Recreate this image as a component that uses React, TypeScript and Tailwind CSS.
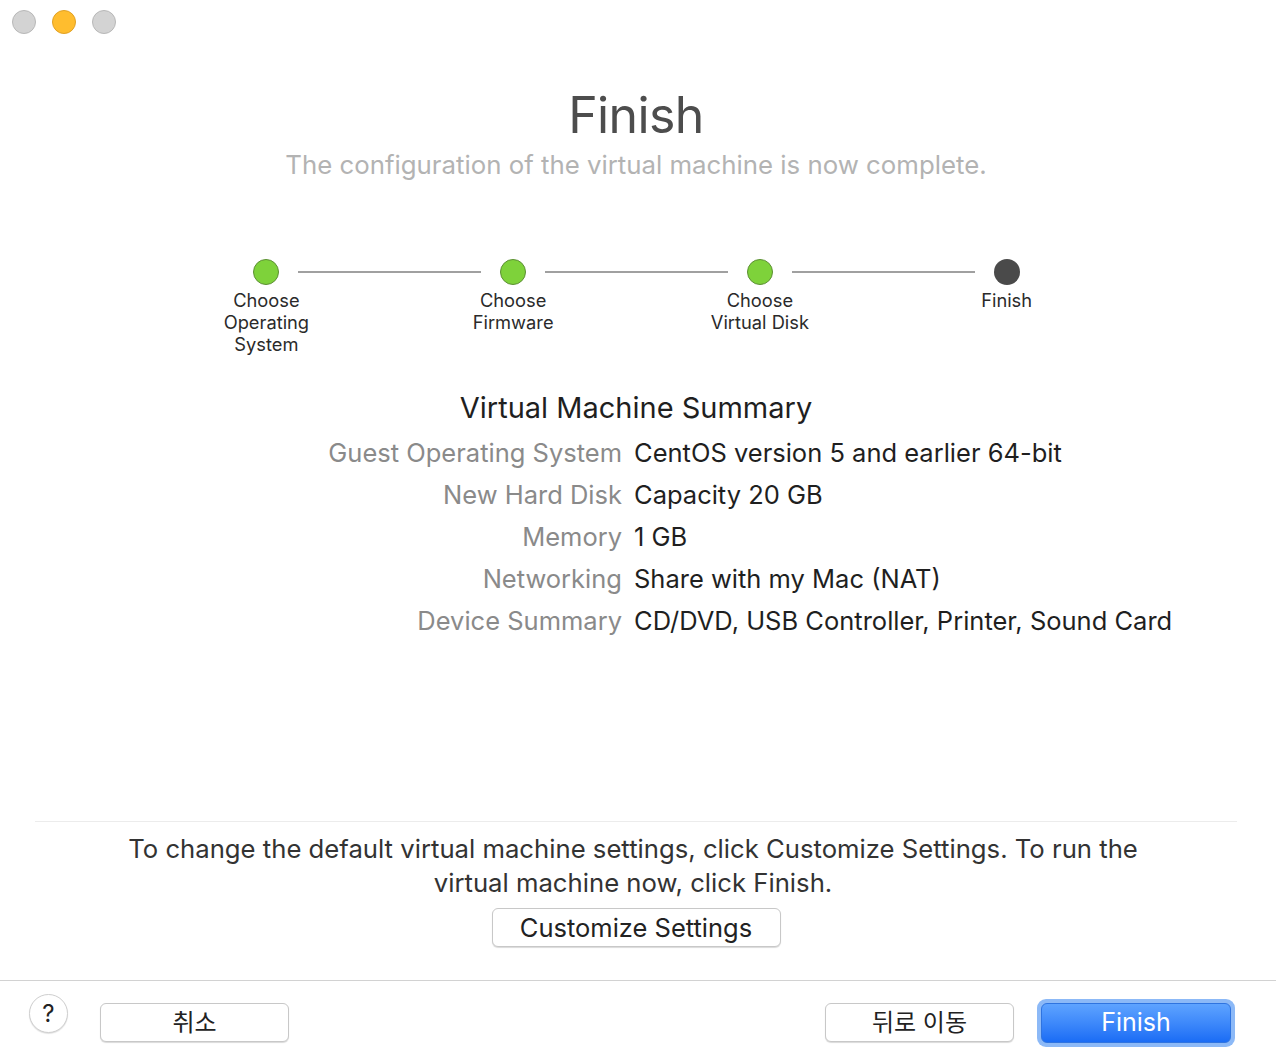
import React from "react"

const font = { fontFamily: "Inter, 'Noto Sans CJK KR', sans-serif" }

type Step = { label: string[]; done: boolean }

const steps: Step[] = [
  { label: ["Choose", "Operating", "System"], done: true },
  { label: ["Choose", "Firmware"], done: true },
  { label: ["Choose", "Virtual Disk"], done: true },
  { label: ["Finish"], done: false },
]

const summary = [
  ["Guest Operating System", "CentOS version 5 and earlier 64-bit"],
  ["New Hard Disk", "Capacity 20 GB"],
  ["Memory", "1 GB"],
  ["Networking", "Share with my Mac (NAT)"],
  ["Device Summary", "CD/DVD, USB Controller, Printer, Sound Card"],
]

function Dot({ done }: { done: boolean }) {
  return done ? (
    <div className="w-[26px] h-[26px] rounded-full bg-[#7ed23a] border border-[#5c8f33] shrink-0" />
  ) : (
    <div className="w-[26px] h-[26px] rounded-full bg-[#4a4a4a] shrink-0" />
  )
}

export default function App() {
  return (
    <div className="w-[1276px] h-[1064px] bg-white flex flex-col text-[#222]" style={font}>
      {/* traffic lights */}
      <div className="flex gap-[16px] pl-[12px] pt-[10px]">
        <div className="w-[24px] h-[24px] rounded-full bg-[#d3d3d3] border border-[#b8b8b8]" />
        <div className="w-[24px] h-[24px] rounded-full bg-[#ffbd2e] border border-[#e1a125]" />
        <div className="w-[24px] h-[24px] rounded-full bg-[#d3d3d3] border border-[#b8b8b8]" />
      </div>

      {/* heading */}
      <div className="flex flex-col items-center pr-[4px] mt-[50px]">
        <h1 className="text-[50px] leading-[62px] text-[#4d4d4d] tracking-[-0.6px]">Finish</h1>
        <p className="text-[25.8px] leading-[34px] text-[#b3b3b3] mt-[2px]">
          The configuration of the virtual machine is now complete.
        </p>
      </div>

      {/* stepper */}
      <div className="w-[987px] ml-[143px] mt-[77px]">
        <div className="flex items-center px-[110px]">
          {steps.map((s, i) => (
            <React.Fragment key={i}>
              <Dot done={s.done} />
              {i < steps.length - 1 && <div className="flex-1 h-[2px] bg-[#a0a0a0] mx-[19px]" />}
            </React.Fragment>
          ))}
        </div>
        <div className="grid grid-cols-4 mt-[4px]">
          {steps.map((s, i) => (
            <div key={i} className="flex flex-col items-center text-[18.3px] leading-[22px] text-[#2a2a2a]">
              {s.label.map((l) => (
                <span key={l}>{l}</span>
              ))}
            </div>
          ))}
        </div>
      </div>

      {/* summary */}
      <h2 className="text-center pr-[4px] text-[29px] leading-[36px] text-[#1f1f1f] mt-[35px]">
        Virtual Machine Summary
      </h2>
      <div className="grid grid-cols-[622px_1fr] gap-x-[12px] mt-[6px] text-[25.5px] leading-[42px]">
        {summary.map(([k, v]) => (
          <React.Fragment key={k}>
            <div className="text-right text-[#8a8a8a]">{k}</div>
            <div className="text-[#1f1f1f]">{v}</div>
          </React.Fragment>
        ))}
      </div>

      <div className="flex-1" />

      {/* customize */}
      <div className="ml-[35px] mr-[39px] border-t border-[#ececec] flex flex-col items-center pt-[10px] pb-[33px]">
        <p className="text-[25.7px] leading-[34px] text-[#333] text-center w-[1060px] pr-[6px]">
          To change the default virtual machine settings, click Customize Settings. To run the virtual machine now, click Finish.
        </p>
        <button className="mt-[8px] w-[289px] h-[39px] rounded-[6px] bg-white border border-[#c8c8c8] shadow-[0_1px_1px_rgba(0,0,0,0.15)] text-[25.5px] text-[#222]">
          Customize Settings
        </button>
      </div>

      {/* footer */}
      <div className="border-t border-[#d2d2d2] h-[84px] flex items-center pl-[29px] pr-[41px]">
        <button className="mb-[18px] w-[39px] h-[39px] rounded-full bg-white border border-[#cfcfcf] shadow-[0_1px_1px_rgba(0,0,0,0.12)] text-[24px] text-[#222] flex items-center justify-center">
          ?
        </button>
        <button className="ml-[32px] w-[189px] h-[39px] rounded-[6px] bg-white border border-[#c8c8c8] shadow-[0_1px_1px_rgba(0,0,0,0.15)] text-[24px] text-[#222]">
          취소
        </button>
        <div className="flex-1" />
        <button className="w-[189px] h-[39px] rounded-[6px] bg-white border border-[#c8c8c8] shadow-[0_1px_1px_rgba(0,0,0,0.15)] text-[24px] text-[#222]">
          뒤로 이동
        </button>
        <div className="ml-[23px] p-[4px] rounded-[9px] bg-[#8cb9f7]">
          <button className="w-[190px] h-[40px] rounded-[6px] bg-gradient-to-b from-[#5ea3ff] to-[#1a6cf5] border border-[#2f74e0] text-[25px] text-white">
            Finish
          </button>
        </div>
      </div>
    </div>
  )
}
